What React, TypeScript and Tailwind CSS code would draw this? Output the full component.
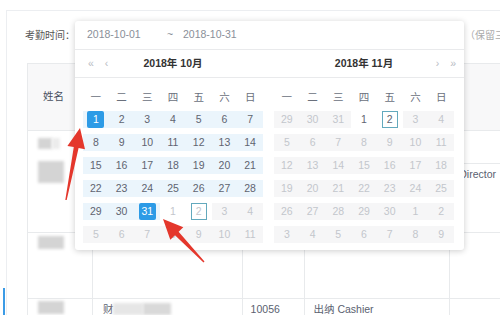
import React from "react";

type Kind = "r" | "s" | "w" | "wg" | "t" | "tg" | "g";
type D = [string, Kind];

const WEEK = ["一", "二", "三", "四", "五", "六", "日"];

const mk = (nums: (string | number)[], k: Kind): D[] => nums.map((n) => [String(n), k]);

const LEFT: D[][] = [
  [["1", "s"], ...mk([2, 3, 4, 5, 6, 7], "r")],
  mk([8, 9, 10, 11, 12, 13, 14], "r"),
  mk([15, 16, 17, 18, 19, 20, 21], "r"),
  mk([22, 23, 24, 25, 26, 27, 28], "r"),
  [["29", "r"], ["30", "r"], ["31", "s"], ["1", "wg"], ["2", "tg"], ["3", "g"], ["4", "g"]],
  mk([5, 6, 7, 8, 9, 10, 11], "g"),
];

const RIGHT: D[][] = [
  [["29", "g"], ["30", "g"], ["31", "g"], ["1", "w"], ["2", "t"], ["3", "g"], ["4", "g"]],
  mk([5, 6, 7, 8, 9, 10, 11], "g"),
  mk([12, 13, 14, 15, 16, 17, 18], "g"),
  mk([19, 20, 21, 22, 23, 24, 25], "g"),
  mk([26, 27, 28, 29, 30, 1, 2], "g"),
  mk([3, 4, 5, 6, 7, 8, 9], "g"),
];

function Cell({ d }: { d: D }) {
  const [t, k] = d;
  const bg =
    k === "r" || k === "s" ? "bg-[#ebf5fc]" : k === "g" ? "bg-[#f6f6f7]" : "bg-white";
  const color =
    k === "r" || k === "w" || k === "t" ? "text-[#5f6470]" : "text-[#c3c6cc]";
  let inner: React.ReactNode = t;
  if (k === "s") {
    inner = (
      <span className="flex h-[17px] w-[17px] items-center justify-center rounded-[2px] bg-[#2d9be6] text-white">
        {t}
      </span>
    );
  } else if (k === "t" || k === "tg") {
    inner = (
      <span className="flex h-[17px] w-[16px] items-center justify-center border border-[#63a9bd]">
        {t}
      </span>
    );
  }
  return (
    <div className={`flex h-[17px] items-center justify-center ${bg} ${color}`}>{inner}</div>
  );
}

function Cal({ rows }: { rows: D[][] }) {
  return (
    <div className="w-[180px]">
      <div className="grid h-[20px] grid-cols-7 items-center text-[10.5px] text-[#6a707c]">
        {WEEK.map((w) => (
          <div key={w} className="text-center">
            {w}
          </div>
        ))}
      </div>
      <div className="mt-[3px] flex flex-col gap-[6px]">
        {rows.map((r, i) => (
          <div key={i} className="grid grid-cols-7 text-[10.5px]">
            {r.map((d, j) => (
              <Cell key={j} d={d} />
            ))}
          </div>
        ))}
      </div>
    </div>
  );
}

function Blur({ w, h, c = "bg-[#d4d4d4]" }: { w: number; h: number; c?: string }) {
  return <div className={`${c} blur-[1.5px]`} style={{ width: w, height: h }} />;
}

export default function App() {
  return (
    <div className="relative flex h-[315px] w-[500px] overflow-hidden bg-white font-['Liberation_Sans','Noto_Sans_CJK_SC',sans-serif]">
      {/* left strip */}
      <div className="flex w-[6px] shrink-0 flex-col justify-end">
        <div className="ml-[3px] h-[27px] w-[2px] bg-[#3b9be6]" />
      </div>

      {/* card */}
      <div className="mt-[10px] min-w-0 flex-1 overflow-hidden border-l border-t border-[#eceef1]">
        <div className="mt-[10px] flex h-[29px] items-center pl-[18px]">
          <span className="w-[50px] shrink-0 text-[10px] text-[#555]">考勤时间：</span>
          <div className="h-full w-[389px] shrink-0" />
          <span className="ml-[1px] shrink-0 whitespace-nowrap text-[10px] text-[#aaa]">（保留三</span>
        </div>

        {/* table */}
        <div className="ml-[20px] mt-[13px] w-[543px] border-l border-t border-[#e8eaec] text-[10.5px] text-[#5a6170]">
          {/* header */}
          <div className="flex h-[67px] bg-[#f8f8f9]">
            <div className="flex w-[65px] items-center border-b border-r border-[#e8eaec] pl-[15px] text-[#495060]">
              姓名
            </div>
            <div className="w-[150px] border-b border-r border-[#e8eaec]" />
            <div className="w-[62px] border-b border-r border-[#e8eaec]" />
            <div className="w-[146px] border-b border-r border-[#e8eaec]" />
            <div className="w-[120px] border-b border-r border-[#e8eaec]" />
          </div>
          {/* row 1 */}
          <div className="flex h-[102px]">
            <div className="flex w-[65px] flex-col gap-[12px] border-b border-r border-[#e8eaec] pl-[10px] pt-[7px]">
              <div className="flex">
                <Blur w={14} h={11} />
                <Blur w={8} h={11} c="bg-[#ececec]" />
              </div>
              <Blur w={26} h={22} />
            </div>
            <div className="w-[150px] border-b border-r border-[#e8eaec]" />
            <div className="w-[62px] border-b border-r border-[#e8eaec]" />
            <div className="w-[146px] border-b border-r border-[#e8eaec]" />
            <div className="flex w-[120px] flex-col border-b border-r border-[#e8eaec]">
              <div className="h-[33px] border-b border-[#e8eaec]" />
              <div className="pl-[9px] pt-[3px]">Director</div>
            </div>
          </div>
          {/* row 2 */}
          <div className="flex h-[66px]">
            <div className="w-[65px] border-b border-r border-[#e8eaec] pl-[10px] pt-[3px]">
              <Blur w={26} h={13} />
            </div>
            <div className="w-[150px] border-b border-r border-[#e8eaec]" />
            <div className="w-[62px] border-b border-r border-[#e8eaec]" />
            <div className="w-[146px] border-b border-r border-[#e8eaec]" />
            <div className="w-[120px] border-b border-r border-[#e8eaec]" />
          </div>
          {/* row 3 */}
          <div className="flex h-[66px]">
            <div className="w-[65px] border-b border-r border-[#e8eaec] pl-[10px] pt-[2px]">
              <Blur w={26} h={13} />
            </div>
            <div className="flex w-[150px] items-start border-b border-r border-[#e8eaec] pl-[10px] pt-[3px]">
              <span>财</span>
              <div className="mt-[1px] flex">
                <Blur w={30} h={12} c="bg-[#e6e6e6]" />
                <Blur w={28} h={12} c="bg-[#d9d9d9]" />
              </div>
            </div>
            <div className="w-[62px] border-b border-r border-[#e8eaec] pl-[8px] pt-[3px]">10056</div>
            <div className="w-[146px] border-b border-r border-[#e8eaec] pl-[9px] pt-[3px]">出纳 Cashier</div>
            <div className="w-[120px] border-b border-r border-[#e8eaec]" />
          </div>
        </div>
      </div>

      {/* date range picker popup */}
      <div className="absolute left-[75px] top-[21px] w-[389px] rounded-[3px] bg-white shadow-[0_1px_6px_rgba(0,0,0,0.2)]">
        <div className="flex h-[29px] items-center border-b border-[#e9eaec] pl-[12px] text-[10.5px] text-[#8a8f99]">
          <span className="w-[80px]">2018-10-01</span>
          <span className="w-[16px]">~</span>
          <span>2018-10-31</span>
        </div>
        <div className="flex h-[28px] gap-[11px] border-b border-[#e9eaec] px-[8px] text-[10.5px]">
          <div className="grid w-[180px] grid-cols-[40px_1fr_40px] items-center">
            <div className="flex gap-[11px] pl-[5px] text-[#b8bcc4]">
              <span>«</span>
              <span>‹</span>
            </div>
            <div className="text-center font-bold text-[#333]">2018年 10月</div>
            <div />
          </div>
          <div className="grid w-[180px] grid-cols-[40px_1fr_40px] items-center">
            <div />
            <div className="text-center font-bold text-[#333]">2018年 11月</div>
            <div className="flex justify-end gap-[11px] pr-0 text-[#b8bcc4]">
              <span>›</span>
              <span className="-mr-[2px]">»</span>
            </div>
          </div>
        </div>
        <div className="flex gap-[11px] px-[8px] pb-[7px] pt-[10px]">
          <Cal rows={LEFT} />
          <Cal rows={RIGHT} />
        </div>
      </div>

      {/* annotation arrows */}
      <svg className="pointer-events-none absolute left-0 top-0" width="500" height="315" viewBox="0 0 500 315">
        <polygon
          fill="#e4372c"
          points="80,128 85,149.3 78.6,148.1 66.7,200.1 65.3,199.9 73.8,147.1 67.4,145.9"
        />
        <polygon
          fill="#e4372c"
          points="163,219 183.3,227.3 178.6,231.8 204.5,261.5 203.5,262.5 175,235.2 170.3,239.7"
        />
      </svg>
    </div>
  );
}
